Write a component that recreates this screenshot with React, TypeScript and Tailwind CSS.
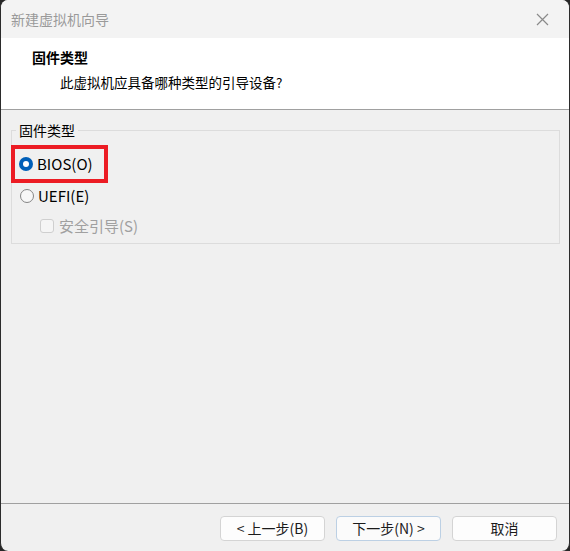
const font = { fontFamily: '"Noto Sans CJK SC", "Noto Sans", sans-serif' };

const Radio = ({ checked }: { checked?: boolean }) =>
  checked ? (
    <span className="flex h-[14px] w-[14px] items-center justify-center rounded-full bg-[#005fb8]">
      <span className="h-[6px] w-[6px] rounded-full bg-white" />
    </span>
  ) : (
    <span className="h-[14px] w-[14px] rounded-full border border-[#858585] bg-[#f7f7f7]" />
  );

const Button = ({ label, focused }: { label: string; focused?: boolean }) => (
  <button
    className={`flex h-[25px] w-[105px] items-center justify-center rounded-[4px] border text-[14px] text-[#1b1b1b] ${
      focused ? "border-[#bcd0e4] bg-[#fbfbfb]" : "border-[#d4d4d4] bg-[#fdfdfd]"
    }`}
  >
    {label}
  </button>
);

export default function App() {
  return (
    <div className="h-[551px] w-[570px] bg-[#262626]" style={font}>
      <div className="flex h-full flex-col overflow-hidden rounded-t-[8px] rounded-b-[8px] border-x border-[#2b2b2b] bg-[#f0f0f0]">
        {/* title bar */}
        <div className="flex h-[38px] items-center justify-between bg-[#f3f3f3] pl-[10px] pr-[20px]">
          <span className="text-[14px] text-[#9a9a9a]">新建虚拟机向导</span>
          <svg width="13" height="13" viewBox="0 0 13 13">
            <path d="M1 1L12 12M12 1L1 12" stroke="#8a8a8a" strokeWidth="1.2" />
          </svg>
        </div>

        {/* header */}
        <div className="h-[72px] border-b border-[#a0a0a0] bg-white pl-[31px] pt-[9px]">
          <div className="text-[14px] font-bold leading-[20px] text-black">固件类型</div>
          <div className="mt-[5px] pl-[28px] text-[13.5px] leading-[20px] text-black">
            此虚拟机应具备哪种类型的引导设备?
          </div>
        </div>

        {/* body */}
        <div className="flex-1 px-[10px] pt-[20px]">
          <div className="relative h-[114px] w-[549px] border border-[#dcdcdc]">
            <span className="absolute -top-[11px] left-[4px] bg-[#f0f0f0] px-[3px] text-[14px] leading-[20px] text-black">
              固件类型
            </span>
            <div className="mt-[14px] flex h-[38px] w-[97px] -ml-[1px] items-center gap-[4px] border-[4px] border-[#ec1c24] pl-[4px]">
              <Radio checked />
              <span className="text-[15px] text-black">BIOS(O)</span>
            </div>
            <div className="mt-[2px] flex items-center gap-[4px] pl-[8px]">
              <Radio />
              <span className="text-[15px] text-black">UEFI(E)</span>
            </div>
            <div className="mt-[7px] flex items-center gap-[5px] pl-[28px]">
              <span className="h-[14px] w-[14px] rounded-[3px] border border-[#cfcfcf] bg-[#f5f5f5]" />
              <span className="text-[15px] text-[#a0a0a0]">安全引导(S)</span>
            </div>
          </div>
        </div>

        {/* footer */}
        <div className="flex h-[48px] items-start justify-end gap-[11px] border-t border-[#a0a0a0] pr-[12px] pt-[12px]">
          <Button label="< 上一步(B)" />
          <Button label="下一步(N) >" focused />
          <Button label="取消" />
        </div>
      </div>
    </div>
  );
}
